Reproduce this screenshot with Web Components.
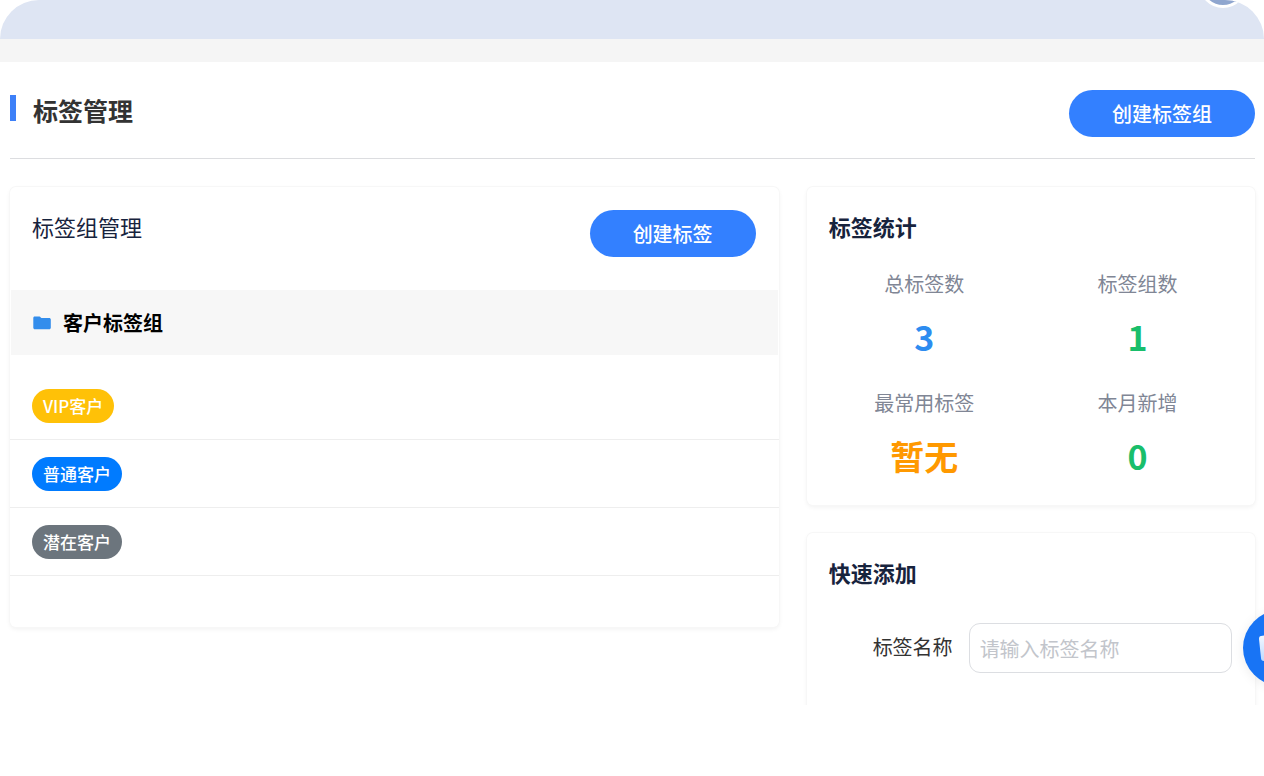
<!DOCTYPE html>
<html lang="zh-CN">
<head>
<meta charset="utf-8">
<meta name="viewport" content="width=device-width, initial-scale=1">
<title>标签管理</title>
<style>
html, body { margin: 0; height: 100%; }
body { background: #fff; color: #333; font: 20px/28px "Noto Sans CJK SC", sans-serif; }
</style>
</head>
<body>
<tag-app></tag-app>

<script>
function define(name, html, setup) {
  const template = document.createElement('template');
  template.innerHTML = html;
  customElements.define(name, class extends HTMLElement {
    constructor() {
      super();
      this.attachShadow({ mode: 'open' }).append(template.content.cloneNode(true));
    }
    connectedCallback() { if (setup) setup(this, this.shadowRoot); }
  });
}

define('top-bar', `
<style>
:host { display: block; position: relative; overflow: hidden; height: 39px; background: #dee5f3; border-radius: 40px 40px 0 0; }
.avatar { position: absolute; right: 17px; bottom: 31px; width: 42px; height: 42px; border: 3px solid #fff; border-radius: 50%; background: #8fa6cf; }
</style>
<span class="avatar"></span>`);

define('pill-button', `
<style>
:host { display: block; }
button { display: block; height: 47px; padding: 0 43px; border: 0; border-radius: 24px; background: #3380ff; color: #fff; font: inherit; font-size: 20px; font-weight: 500; white-space: nowrap; cursor: pointer; }
</style>
<button type="button"><slot></slot></button>`);

define('page-heading', `
<style>
:host { display: flex; justify-content: space-between; align-items: flex-start; padding: 28px 0 21px; border-bottom: 1px solid #dcdde0; }
.title { display: flex; align-items: center; gap: 17px; }
.mark { width: 6px; height: 26px; margin-bottom: 4px; background: #3d80f8; }
h1 { margin: 0; font-size: 25px; line-height: 40px; font-weight: 700; color: #333; }
</style>
<div class="title"><span class="mark"></span><h1><slot></slot></h1></div>
<slot name="action"></slot>`);

define('panel-card', `
<style>
:host { display: block; border-radius: 6px; background: #fff; box-shadow: 0 0 0 1px #f7f7f7, 0 2px 5px rgba(0,0,0,.06); }
header { display: flex; justify-content: space-between; align-items: flex-start; padding: 23px 23px 0 22px; }
h2 { margin: 0 0 4px; font-size: 22px; line-height: 32px; font-weight: 700; color: #17233d; }
:host([light]) h2 { font-weight: 400; }
</style>
<header><h2><slot name="title"></slot></h2><slot name="action"></slot></header>
<slot></slot>`);

define('tag-group', `
<style>
:host { display: block; padding: 33px 0 51px; }
.band { display: flex; align-items: center; gap: 12px; height: 65px; margin: 0 1px 17px; padding: 0 22px; background: #f7f7f7; }
svg { display: block; width: 18px; height: 14px; }
h3 { margin: 0; font-size: 20px; line-height: 28px; font-weight: 700; color: #000; }
</style>
<div class="band">
  <svg viewBox="0 0 18 14" aria-hidden="true"><path fill="#338dec" d="M1.700.5h4.800c.9 0 1.200 1.500 2 1.500h7.700c.9 0 1.600.6 1.600 1.500v8.200c0 .9-.7 1.500-1.600 1.500H1.900c-.9 0-1.600-.6-1.600-1.500V2c0-.9.5-1.500 1.400-1.500z"/></svg>
  <h3><slot name="name"></slot></h3>
</div>
<slot></slot>`);

define('tag-row', `
<style>
:host { display: flex; padding: 17px 22px 16px; border-bottom: 1px solid #eee; }
span { display: block; padding: 0 11px; border-radius: 17px; background: var(--tag); color: #fff; font-size: 17px; line-height: 34px; font-weight: 500; }
</style>
<span><slot></slot></span>`);

define('stat-grid', `
<style>
:host { display: grid; grid-template-columns: 1fr 1fr; gap: 28px 22px; padding: 24px 22px 25px; }
</style>
<slot></slot>`);

define('stat-item', `
<style>
:host { display: flex; flex-direction: column; align-items: center; gap: 15px; }
.label { font-size: 20px; line-height: 28px; color: #808695; }
.value { font-size: 34px; line-height: 48px; font-weight: 700; color: var(--value); }
</style>
<span class="label"><slot name="label"></slot></span>
<span class="value"><slot></slot></span>`);

define('form-row', `
<style>
:host { display: flex; align-items: center; gap: 16px; padding: 31px 23px 80px 22px; }
label { flex: 0 0 124px; text-align: right; font-size: 20px; line-height: 28px; color: #333; padding-bottom: 2px; }
input { flex: 1; min-width: 0; box-sizing: border-box; height: 50px; padding: 0 10px; border: 1px solid #dcdee2; border-radius: 11px; background: #fff; font: inherit; font-size: 20px; color: #333; }
input::placeholder { color: #c2c5cb; opacity: 1; }
</style>
<label for="field"></label><input id="field" type="text">`, (host, root) => {
  root.querySelector('label').textContent = host.getAttribute('label');
  root.querySelector('input').placeholder = host.getAttribute('placeholder');
});

define('help-bubble', `
<style>
:host { display: block; position: absolute; right: -55px; bottom: 19px; }
button { display: block; width: 76px; height: 76px; padding: 0; border: 0; border-radius: 50%; background: #1874f5; box-shadow: 0 2px 12px rgba(0,0,0,.08); cursor: pointer; }
svg { display: block; width: 76px; height: 76px; }
</style>
<button type="button" aria-label="客服">
  <svg viewBox="0 0 76 76" aria-hidden="true">
    <defs><linearGradient id="g" x1="0" y1="0" x2="0" y2="1"><stop offset="0" stop-color="#fff"/><stop offset="1" stop-color="#bcd8ff"/></linearGradient></defs>
    <path fill="url(#g)" d="M18 26l40-6q3 0 3 3v26q0 3-3 3l-37-1q-3 0-3-3l-2-19q0-3 2-3z"/>
  </svg>
</button>`);

define('tag-app', `
<style>
:host { display: flex; flex-direction: column; box-sizing: border-box; height: 100vh; padding-bottom: 71px; }
.strip { flex: none; height: 23px; background: #f5f5f5; }
main { flex: 1; min-height: 0; position: relative; overflow: hidden; padding: 0 9px 0 10px; background: #fff; }
.columns { display: grid; grid-template-columns: 12fr 7fr; gap: 28px; align-items: start; padding-top: 28px; }
aside { display: grid; gap: 28px; }
top-bar { flex: none; }
</style>
<top-bar></top-bar>
<div class="strip"></div>
<main>
  <page-heading>标签管理<pill-button slot="action">创建标签组</pill-button></page-heading>
  <div class="columns">
    <panel-card light>
      <span slot="title">标签组管理</span>
      <pill-button slot="action">创建标签</pill-button>
      <tag-group>
        <span slot="name">客户标签组</span>
        <tag-row style="--tag:#ffc107">VIP客户</tag-row>
        <tag-row style="--tag:#007bff">普通客户</tag-row>
        <tag-row style="--tag:#6c757d">潜在客户</tag-row>
      </tag-group>
    </panel-card>
    <aside>
      <panel-card>
        <span slot="title">标签统计</span>
        <stat-grid>
          <stat-item style="--value:#2d8cf0"><span slot="label">总标签数</span>3</stat-item>
          <stat-item style="--value:#19be6b"><span slot="label">标签组数</span>1</stat-item>
          <stat-item style="--value:#ff9900"><span slot="label">最常用标签</span>暂无</stat-item>
          <stat-item style="--value:#19be6b"><span slot="label">本月新增</span>0</stat-item>
        </stat-grid>
      </panel-card>
      <panel-card>
        <span slot="title">快速添加</span>
        <form-row label="标签名称" placeholder="请输入标签名称"></form-row>
      </panel-card>
    </aside>
  </div>
  <help-bubble></help-bubble>
</main>`);
</script>
</body>
</html>
